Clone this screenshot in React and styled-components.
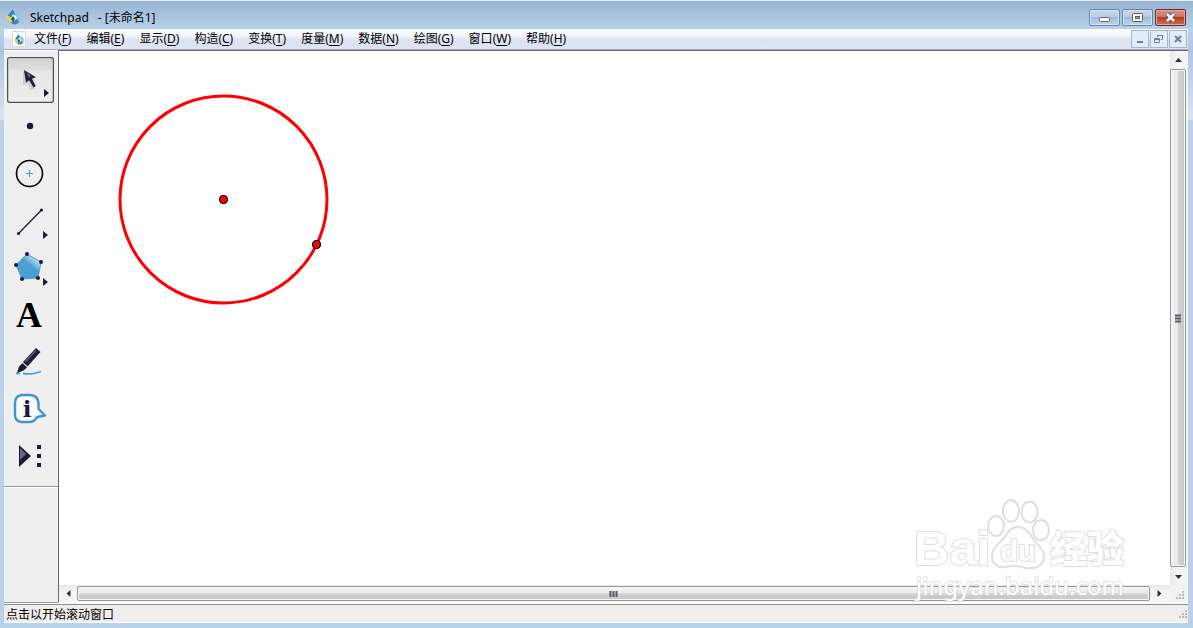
import React, { useState } from "react";
import styled, { createGlobalStyle } from "styled-components";

const GlobalStyle = createGlobalStyle`
  * { box-sizing: border-box; }
  body {
    margin: 0;
    font: 12px/16px "Noto Sans", "Noto Sans CJK SC", sans-serif;
    color: #000;
  }
  button {
    font: inherit;
    color: inherit;
    padding: 0;
    border: none;
    background: none;
  }
  svg { display: block; flex: none; }
`;

const Window = styled.div`
  min-height: 100vh;
  display: flex;
  flex-direction: column;
  padding: 0 5px 5px 4px;
  background: linear-gradient(#98b4d2 0, #b9d1ea 29px, #abc6e4 50px, #d6e6f6 118px, #b9d1ea 120px);
  border-top: 1px solid #e6eef7;
`;

const TitleBar = styled.header`
  display: flex;
  align-items: center;
  height: 28px;
  padding: 4px 2px 0 2px;
  gap: 8px;
`;

const Title = styled.h1`
  flex: 1;
  display: flex;
  gap: 9px;
  margin: 0;
  padding-top: 2px;
  font-size: 12px;
  font-weight: 400;
`;

const Controls = styled.div`
  display: flex;
  gap: ${p => p.$gap}px;
`;

const FrameButton = styled.button`
  display: grid;
  place-items: center;
  width: 31px;
  height: 17px;
  border: 1px solid ${p => (p.$close ? "#5c2c36" : "#6882a0")};
  border-radius: 2px;
  box-shadow: inset 0 0 0 1px ${p => (p.$close ? "#e3a79c" : "#d5e5f5")};
  background: ${p =>
    p.$close
      ? "linear-gradient(#dc9485 0, #cf6f5b 48%, #b83b22 50%, #cd7258 100%)"
      : "linear-gradient(#c5d8ed 0, #b6cde6 48%, #9fbbd9 50%, #bdd5ee 100%)"};
`;

const MenuBar = styled.nav`
  display: flex;
  align-items: center;
  height: 20px;
  padding: 0 1px 0 8px;
  background: linear-gradient(#fff 0, #f1f4fb 35%, #dde2f2 55%, #dfe4f4 100%);
`;

const MenuList = styled.div`
  flex: 1;
  display: flex;
  gap: 15px;
`;

const MenuItem = styled.button`
  white-space: nowrap;
  u { text-underline-offset: 2px; }
`;

const DocIcon = styled.div`
  display: grid;
  place-items: center;
  width: 14px;
  height: 16px;
  margin-right: 8px;
  border: 1px solid #d5d8de;
  background: #fff;
`;

const ChildButton = styled.button`
  display: grid;
  place-items: center;
  width: 18px;
  height: 18px;
  border: 1px solid #a3b5cc;
  background: #e2edf9;
`;

const Body = styled.div`
  flex: 1;
  display: flex;
  min-height: 0;
  border-top: 1px solid #a9abb5;
  border-bottom: 1px solid #fff;
`;

const Toolbox = styled.aside`
  width: 54px;
  flex: none;
  background: #efefef;
  border-top: 1px solid #fff;
  border-bottom: 1px solid #969696;
`;

const Tools = styled.div`
  display: flex;
  flex-direction: column;
  align-items: flex-start;
  gap: 1px;
  padding: 6px 3px 7px;
  border-bottom: 1px solid #969696;
  box-shadow: 0 1px #fff;
`;

const Tool = styled.button`
  width: 47px;
  height: 46px;
  border-radius: 3px;
  box-shadow: ${p => (p.$active ? "inset 0 0 0 1px #4e4e4e, inset 0 0 0 2px #c4c4c4" : "none")};
  background: ${p => (p.$active ? "linear-gradient(#d2d2d2 0, #dedede 27%, #e6e6e6 29%, #ededed 100%)" : "none")};
`;

const View = styled.main`
  position: relative;
  flex: 1;
  min-width: 0;
  display: grid;
  grid-template-columns: 1fr 18px;
  grid-template-rows: 1fr 17px;
  border: 1px solid #66686c;
  border-width: 1px 0 1px 1px;
  border-bottom-color: #fff;
  background: #fff;
`;

const Sketch = styled.svg`
  width: 100%;
  height: 100%;
  min-height: 0;
`;

const ScrollBar = styled.div`
  display: flex;
  flex-direction: ${p => (p.$vertical ? "column" : "row")};
  padding-right: 2px;
  background: linear-gradient(${p => (p.$vertical ? "to right" : "to bottom")}, #e9e9e9, #f4f4f4 40%, #f4f4f4);
`;

const Arrow = styled.button`
  display: grid;
  place-items: center;
  flex: 0 0 18px;
`;

const Thumb = styled.div`
  display: grid;
  place-items: center;
  flex: 1;
  margin: ${p => (p.$vertical ? "0" : "1px 0")};
  border: 1px solid #969696;
  border-radius: 2px;
  box-shadow: inset 0 0 0 1px #f7f7f7;
  background: linear-gradient(
    ${p => (p.$vertical ? "to right" : "to bottom")},
    #f4f4f4 0, #e8e8ea 48%, #d2d2d5 52%, #c5c5c9 100%
  );
`;

const Corner = styled.div`
  display: flex;
  align-items: flex-end;
  justify-content: flex-end;
  padding: 2px 4px;
  background: #f2f2f2;
`;

const Watermark = styled.svg`
  position: absolute;
  right: 56px;
  bottom: 0;
  pointer-events: none;
  text { paint-order: stroke; }
`;

const Status = styled.footer`
  display: flex;
  align-items: center;
  height: 19px;
  padding: 2px 1px 0 2px;
  border-top: 1px solid #8e8e8e;
  border-bottom: 1px solid #fff;
  background: #f0eded;
`;

const StatusText = styled.span`
  flex: 1;
`;

const menus = [
  ["文件", "F"], ["编辑", "E"], ["显示", "D"], ["构造", "C"], ["变换", "T"],
  ["度量", "M"], ["数据", "N"], ["绘图", "G"], ["窗口", "W"], ["帮助", "H"],
];

const Logo = ({ size }) => (
  <svg width={size} height={size} viewBox="0 0 16 16" aria-hidden="true">
    <path d="M7 0C7 3 10 4 9 8L5 14C1 12 0 8 3 5Z" fill="#2b87b8" />
    <path d="M10 3C15 5 16 11 12 14L7 12Z" fill="#8fc4dc" />
    <path d="M7 5 11 8 9 13 5 9Z" fill="#e4f5fa" />
    <path d="M1 6 6 9 6 14C2 13 0 10 1 6Z" fill="#f0d34c" />
    <path d="M6 13 11 10 13 13C11 16 7 16 5 14Z" fill="#3f86ae" />
    <path d="M7 7 9 10 7 13 5 10Z" fill="#16587e" />
  </svg>
);

const tools = [
  {
    name: "移动箭头工具",
    icon: (
      <>
        <path d="M16 14v15l4-3 4 7 4-2-4-7 4-1z" fill="#777" opacity=".25" />
        <path d="M17 13 19 25.500 22.200 23.200 26.500 30.500 28.800 29 24.800 21.800 29 20.200Z" fill="#211b3b" />
        <path d="M19 15.500 24 19 22 20.500Z" fill="#77738a" />
        <path d="M37 32v8l5-4z" fill="#1d1838" />
      </>
    ),
  },
  { name: "点工具", icon: <circle cx="23" cy="22" r="3.200" fill="#1d1838" /> },
  {
    name: "圆工具",
    icon: (
      <>
        <circle cx="22.500" cy="22.500" r="13" fill="none" stroke="#000" strokeWidth="1.600" />
        <path d="M19 22.500h7M22.500 19v7" stroke="#4c98bd" />
      </>
    ),
  },
  {
    name: "线段工具",
    icon: (
      <>
        <path d="M11.500 35.500 34.500 12" stroke="#1d1838" strokeWidth="1.300" />
        <circle cx="11.500" cy="35.500" r="1.600" fill="#1d1838" />
        <circle cx="34.500" cy="12" r="1.600" fill="#1d1838" />
        <path d="M36 33v8l5-4z" fill="#1d1838" />
      </>
    ),
  },
  {
    name: "多边形工具",
    icon: (
      <>
        <defs>
          <linearGradient id="poly" x1=".85" y1=".1" x2=".45" y2=".6">
            <stop offset="0" stopColor="#d5eaf7" />
            <stop offset=".4" stopColor="#8fc4e5" />
            <stop offset=".7" stopColor="#4b9fd5" />
          </linearGradient>
        </defs>
        <path d="M20 9 34 17 31 33 15 34 9 20Z" fill="url(#poly)" stroke="#4b9fd5" />
        {[[20, 9], [34, 17], [31, 33], [15, 34], [9, 20]].map(([x, y]) => (
          <circle key={x} cx={x} cy={y} r="2" fill="#1d1838" />
        ))}
        <path d="M36 33v8l5-4z" fill="#1d1838" />
      </>
    ),
  },
  {
    name: "文本工具",
    icon: (
      <text x="22" y="35" textAnchor="middle" fontFamily="Liberation Serif, serif" fontWeight="700" fontSize="36">A</text>
    ),
  },
  {
    name: "标记工具",
    icon: (
      <>
        <path d="M16 34.500Q24 35.500 29 34T34 32.500" fill="none" stroke="#4b9fd5" strokeWidth="1.800" />
        <path d="M9 34.500h4" stroke="#4b9fd5" strokeWidth="1.800" />
        <path d="M10 34 12 27.500 15.500 24 20 28.500 16.500 31.500Z" fill="#1d1838" />
        <path d="M16 23 29 9 33.500 13 20.500 27.500Z" fill="#211b3b" />
        <path d="M18.500 22.500 29 11.500" stroke="#6b667e" strokeWidth="1.200" />
        <path d="m15.500 23.500 4.500 4.500" stroke="#d5d4db" />
      </>
    ),
  },
  {
    name: "信息工具",
    icon: (
      <>
        <path
          d="M14.500 9H23Q31 9.500 31.500 17V23L38 29.500 30 31Q28 35.500 23 36H15Q8 35.500 8 29V17Q8 10 14.500 9Z"
          fill="#f8fbfd" stroke="#4193cd" strokeWidth="2.400" strokeLinejoin="round"
        />
        <text x="20" y="31" textAnchor="middle" fontFamily="DejaVu Serif, serif" fontWeight="700" fontSize="23" fill="#1d1838">i</text>
      </>
    ),
  },
  {
    name: "自定义工具",
    icon: (
      <>
        <path d="M12 12 24 23 12 34Z" fill="#1d1838" />
        <path d="M13 15 19 21 13 27Z" fill="#696678" />
        <path d="M30 12h4v4h-4zM30 21h4v4h-4zM30 30h4v4h-4z" fill="#1d1838" />
      </>
    ),
  },
];

const arrows = {
  up: "M1 6 4.500 2 8 6Z",
  down: "M1 3 4.500 7 8 3Z",
  left: "M6.500 1 2.500 4.500 6.500 8Z",
  right: "M2.500 1 6.500 4.500 2.500 8Z",
};

const ScrollArrow = ({ dir, label }) => (
  <Arrow aria-label={label}>
    <svg width="9" height="9"><path d={arrows[dir]} fill="#303030" /></svg>
  </Arrow>
);

const SizeGrip = () => (
  <svg width="9" height="9" aria-hidden="true">
    <path d="M7 0h2v2H7zM4 3h2v2H4zM7 3h2v2H7zM1 6h2v2H1zM4 6h2v2H4zM7 6h2v2H7z" fill="#b9b9b9" />
  </svg>
);

const BaiduMark = () => (
  <Watermark width="220" height="104" viewBox="0 0 220 104">
    <g fill="#fff" stroke="#dedede" strokeWidth="2">
      <text x="2" y="67" fontFamily="Liberation Sans, sans-serif" fontWeight="700" fontSize="49">Bai</text>
      <ellipse cx="84" cy="28" rx="8" ry="10" />
      <ellipse cx="99" cy="13" rx="8" ry="11" />
      <ellipse cx="117.500" cy="14" rx="8" ry="10.500" />
      <ellipse cx="129" cy="32" rx="8" ry="10" />
      <path d="M106 29C99 29 96 34 92 40C87 46 80 50 80 58C80 66 86 70 93 69C99 68 104 67 110 69C120 72 132 70 132 58C132 50 124 46 120 39C116 33 112 29 106 29Z" />
      <text x="106" y="63" textAnchor="middle" fontFamily="Liberation Sans, sans-serif" fontWeight="700" fontSize="29">du</text>
      <text x="138" y="65" fontFamily="Noto Sans CJK SC, sans-serif" fontWeight="900" fontSize="37">经验</text>
    </g>
    <text
      x="4" y="97" fontFamily="Noto Sans, sans-serif" fontSize="24"
      fill="#fff" stroke="#d0d0d0" strokeOpacity=".65" strokeWidth="2"
    >
      jingyan.baidu.com
    </text>
  </Watermark>
);

const App = () => {
  const [tool, setTool] = useState(0);
  return (
    <>
      <GlobalStyle />
      <Window>
        <TitleBar>
          <Logo size={16} />
          <Title><span>Sketchpad</span><span>- [未命名1]</span></Title>
          <Controls $gap={2}>
            <FrameButton aria-label="最小化">
              <svg width="13" height="11"><rect x="1.500" y="5.500" width="10" height="4" rx="1" fill="#fff" stroke="#62666e" /></svg>
            </FrameButton>
            <FrameButton aria-label="最大化">
              <svg width="11" height="9">
                <rect x=".5" y=".5" width="10" height="8" rx="1" fill="#fff" stroke="#52565e" />
                <rect x="3.500" y="3.500" width="4" height="2" fill="#9cb7d4" stroke="#52565e" />
              </svg>
            </FrameButton>
            <FrameButton $close aria-label="关闭">
              <svg width="13" height="11">
                <path d="m3 2 7 7m0-7-7 7" stroke="#5c4650" strokeWidth="4.500" />
                <path d="m3 2 7 7m0-7-7 7" stroke="#fff" strokeWidth="2.500" />
              </svg>
            </FrameButton>
          </Controls>
        </TitleBar>
        <MenuBar>
          <DocIcon><Logo size={11} /></DocIcon>
          <MenuList>
            {menus.map(([label, key]) => (
              <MenuItem key={key}>{label}(<u>{key}</u>)</MenuItem>
            ))}
          </MenuList>
          <Controls $gap={1}>
            <ChildButton aria-label="最小化文档">
              <svg width="10" height="10"><path d="M2 7h6v2H2z" fill="#6c7f94" /></svg>
            </ChildButton>
            <ChildButton aria-label="还原文档">
              <svg width="10" height="10" fill="none" stroke="#6c7f94">
                <path d="M3.500 3V1.500h5v4H7M3 1.500h6M.5 4.500h5v4h-5zM.5 5.500h5" />
              </svg>
            </ChildButton>
            <ChildButton aria-label="关闭文档">
              <svg width="10" height="10"><path d="m2 2 6 6m0-6-6 6" stroke="#6c7f94" strokeWidth="2" /></svg>
            </ChildButton>
          </Controls>
        </MenuBar>
        <Body>
          <Toolbox>
            <Tools>
              {tools.map((t, i) => (
                <Tool key={t.name} aria-label={t.name} $active={i === tool} onClick={() => setTool(i)}>
                  <svg width="47" height="46">{t.icon}</svg>
                </Tool>
              ))}
            </Tools>
          </Toolbox>
          <View>
            <Sketch>
              <circle cx="164.500" cy="148.500" r="103.500" fill="none" stroke="#f00" strokeWidth="3" />
              <circle cx="164.500" cy="148.500" r="4" fill="#f00" stroke="#000" strokeWidth="1.200" />
              <circle cx="257.500" cy="193.500" r="4" fill="#f00" stroke="#000" strokeWidth="1.200" />
            </Sketch>
            <ScrollBar $vertical>
              <ScrollArrow dir="up" label="向上滚动" />
              <Thumb $vertical>
                <svg width="8" height="9"><path d="M1 1.500h6M1 4.500h6M1 7.500h6" stroke="#55585c" strokeWidth="2" /></svg>
              </Thumb>
              <ScrollArrow dir="down" label="向下滚动" />
            </ScrollBar>
            <ScrollBar>
              <ScrollArrow dir="left" label="向左滚动" />
              <Thumb>
                <svg width="9" height="8"><path d="M1.500 1v6M4.500 1v6M7.500 1v6" stroke="#55585c" strokeWidth="2" /></svg>
              </Thumb>
              <ScrollArrow dir="right" label="向右滚动" />
            </ScrollBar>
            <Corner><SizeGrip /></Corner>
            <BaiduMark />
          </View>
        </Body>
        <Status>
          <StatusText>点击以开始滚动窗口</StatusText>
          <SizeGrip />
        </Status>
      </Window>
    </>
  );
};

export default App;
